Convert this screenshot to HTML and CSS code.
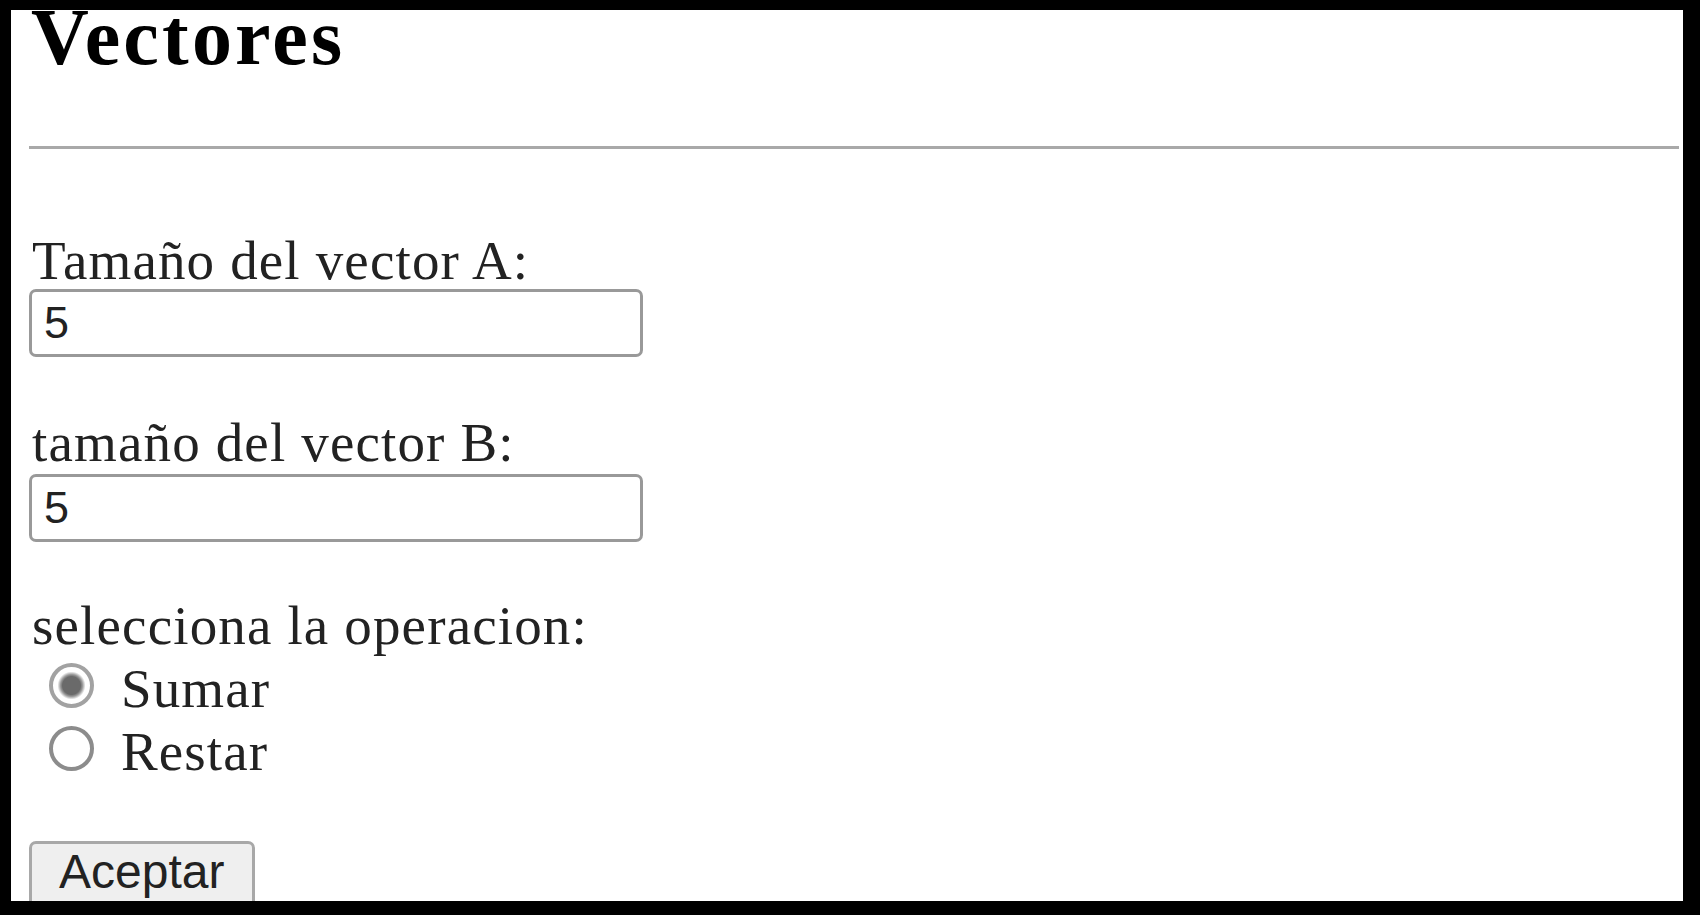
FILE: index.html
```html
<!DOCTYPE html>
<html lang="es">
<head>
<meta charset="utf-8">
<title>Vectores</title>
<link rel="stylesheet" href="styles.css">
</head>
<body>
<div class="frame">
  <h2 class="title">Vectores</h2>
  <hr class="rule">
  <form class="form">
    <label class="label label-a" for="va">Tamaño del vector A:</label>
    <input class="field field-a" id="va" type="text" value="5">
    <label class="label label-b" for="vb">tamaño del vector B:</label>
    <input class="field field-b" id="vb" type="text" value="5">
    <div class="label label-op">selecciona la operacion:</div>
    <label class="option option-first"><input class="radio" type="radio" name="op" checked><span>Sumar</span></label>
    <label class="option"><input class="radio" type="radio" name="op"><span>Restar</span></label>
    <button class="btn" type="button">Aceptar</button>
  </form>
</div>
</body>
</html>
```

FILE: styles.css
```css
html {
  background: #000;
}
body {
  margin: 0;
  background: #000;
}
.frame {
  box-sizing: border-box;
  margin: 10px 17px 0 11px;
  height: 891px;
  background: #fff;
  overflow: hidden;
  padding: 0 4px 0 18px;
  font-family: "Liberation Serif", "Times New Roman", serif;
  color: #222;
}
.title {
  margin: 0;
  padding-left: 2px;
  font-size: 80px;
  line-height: 54px;
  letter-spacing: 3.2px;
  font-weight: bold;
  color: #000;
}
.rule {
  margin: 82px 0 0 0;
  border: none;
  height: 3px;
  background: #a9a9a9;
}
.form {
  display: flex;
  flex-direction: column;
  align-items: flex-start;
}
.label {
  display: block;
  padding-left: 3px;
  font-size: 55px;
  line-height: 56px;
  letter-spacing: 1.15px;
}
.label-a {
  margin-top: 84px;
}
.label-b {
  margin-top: 58px;
}
.label-op {
  margin-top: 56px;
}
.field {
  box-sizing: border-box;
  width: 614px;
  height: 68px;
  margin: 0;
  border: 3px solid #999;
  border-radius: 7px;
  padding: 0 0 0 12px;
  font-family: "Liberation Sans", Arial, sans-serif;
  font-size: 45px;
  color: #222;
  background: #fff;
  outline: none;
}
.field-b {
  margin-top: 3px;
}
.option {
  display: flex;
  align-items: center;
  height: 63px;
  font-size: 55px;
  line-height: 63px;
  letter-spacing: 1.1px;
}
.option-first {
  margin-top: 3px;
}
.radio {
  appearance: none;
  -webkit-appearance: none;
  box-sizing: border-box;
  width: 45px;
  height: 45px;
  margin: 0 27px 6px 20px;
  border: 4px solid #8c8c8c;
  border-radius: 50%;
  background: #fff;
}
.radio:checked {
  border-color: #a2a2a2;
  background: radial-gradient(circle, #6a6a6a 0 9px, #9a9a9a 11px, #fff 14px);
}
.btn {
  margin-top: 58px;
  border: 3px solid #a8a8a8;
  border-radius: 7px;
  background: #efefef;
  padding: 2px 28px 12px 27px;
  font-family: "Liberation Sans", Arial, sans-serif;
  font-size: 48px;
  line-height: 52px;
  color: #222;
}
```
